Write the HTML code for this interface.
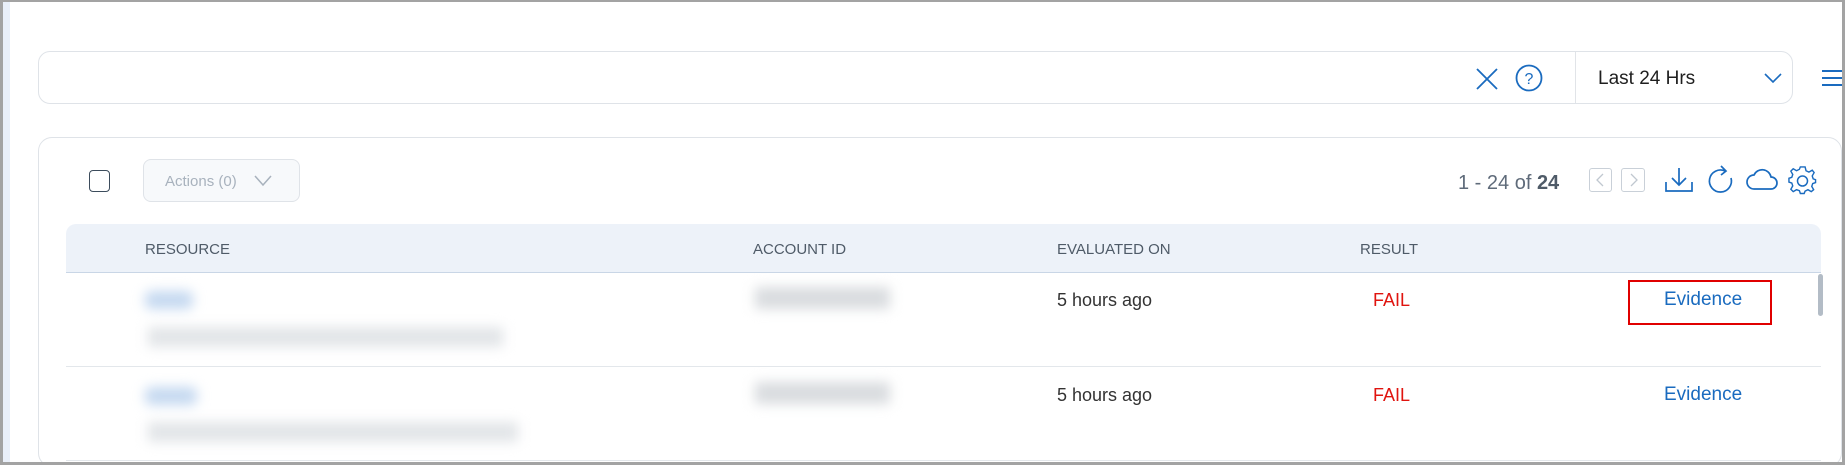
<!DOCTYPE html>
<html><head><meta charset="utf-8"><style>
*{margin:0;padding:0;box-sizing:border-box}
html,body{width:1845px;height:465px;overflow:hidden}
body{background:#fff;font-family:"Liberation Sans",Arial,sans-serif;position:relative}
.a{position:absolute}
.frame{left:0;top:0;width:1845px;height:465px;border-top:2px solid #a3a3a3;border-left:3px solid #a3a3a3;border-right:3px solid #a3a3a3;border-bottom:3px solid #a3a3a3}
.strip{left:3px;top:2px;width:7px;height:460px;background:#e9eff9}
.search{left:38px;top:51px;width:1755px;height:53px;border:1px solid #dfe3e8;border-radius:12px}
.card{left:38px;top:137px;width:1804px;height:330px;border:1px solid #dfe3e8;border-radius:14px}
.hdr{left:66px;top:224px;width:1755px;height:49px;background:#edf2f9;border-bottom:1px solid #c9d6e6;border-radius:10px 10px 0 0}
.ht{top:241px;font-size:15px;color:#4f5b68}
.rt{font-size:18px;color:#333}
.fail{font-size:18px;color:#e0140f}
.ev{font-size:19px;color:#1a6bbf}
.blur{filter:blur(6px)}
</style></head><body>
<div class="a strip"></div>
<div class="a search"></div>
<div class="a" style="left:1575px;top:52px;width:1px;height:51px;background:#e1e4e8"></div>
<svg class="a" style="left:1475px;top:68px" width="24" height="22"><path d="M2 1L22 21M22 1L2 21" stroke="#1a6bbf" stroke-width="1.8" fill="none"/></svg>
<svg class="a" style="left:1515px;top:64px" width="28" height="28"><circle cx="14" cy="14" r="12.5" stroke="#1a6bbf" stroke-width="1.8" fill="none"/><text x="14" y="20" font-size="16" text-anchor="middle" fill="#1a6bbf" font-family="Liberation Sans">?</text></svg>
<div class="a" style="left:1598px;top:68px;font-size:19px;color:#1f1f1f">Last 24 Hrs</div>
<svg class="a" style="left:1764px;top:72px" width="18" height="12"><path d="M1 2L9 10L17 2" stroke="#1a6bbf" stroke-width="1.6" fill="none"/></svg>
<svg class="a" style="left:1820px;top:68px" width="25" height="20"><path d="M2 3H25M2 10H25M2 17H25" stroke="#1a6bbf" stroke-width="2"/></svg>
<div class="a card"></div>
<div class="a" style="left:89px;top:170px;width:21px;height:22px;border:1.5px solid #3c4c5c;border-radius:4px"></div>
<div class="a" style="left:143px;top:159px;width:157px;height:43px;border:1px solid #dfe3e8;border-radius:8px;background:#f7f9fb"></div>
<div class="a" style="left:165px;top:173px;font-size:15px;color:#a8b2bd">Actions (0)</div>
<svg class="a" style="left:254px;top:175px" width="18" height="12"><path d="M1 1L9 10L17 1" stroke="#a8b2bd" stroke-width="1.5" fill="none"/></svg>
<div class="a" style="left:1458px;top:172px;font-size:20px;color:#5f6b7a">1 - 24 of <b style="color:#4f5b68">24</b></div>
<div class="a" style="left:1589px;top:168px;width:23px;height:24px;border:1.5px solid #c9d0d8;border-radius:3px"></div>
<div class="a" style="left:1621px;top:168px;width:24px;height:24px;border:1.5px solid #c9d0d8;border-radius:3px"></div>
<svg class="a" style="left:1589px;top:168px" width="56" height="24"><path d="M14 6L8 12L14 18M42 6L48 12L42 18" stroke="#c0c8d0" stroke-width="1.3" fill="none"/></svg>
<svg class="a" style="left:1664px;top:166px" width="30" height="28"><path d="M2 16V25H28V16M15 2V19M8 12L15 19L22 12" stroke="#1a6bbf" stroke-width="1.7" fill="none"/></svg>
<svg class="a" style="left:1706px;top:164px" width="30" height="32"><path d="M19 7A11 11 0 1 0 25 14M15 2L20 7L15 11" stroke="#1a6bbf" stroke-width="1.7" fill="none"/></svg>
<svg class="a" style="left:1746px;top:166px" width="32" height="26"><path d="M8 23H25A6 6 0 0 0 25 11A9 9 0 0 0 8 9A7 7 0 0 0 8 23Z" stroke="#1a6bbf" stroke-width="1.7" fill="none"/></svg>
<svg class="a" style="left:1788px;top:166px" width="30" height="30"><path d="M15 2L18 2L19 6L22 7.5L25.5 5.5L27.5 8L25.5 11.5L26.5 14.5L29 15.5V18.5L26 19.5L25 22.5L27 26L24.5 28L21 26L18 27.5L17 30H13L12 27L9 26L5.5 28L3 25.5L5 22L4 19L1 18V14L4 13L5 10L3 6.5L5.5 4L9 6L12 4.5L13 2Z" stroke="#1a6bbf" stroke-width="1.5" fill="none" transform="translate(0,-1) scale(0.95)"/><circle cx="14.5" cy="15" r="5" stroke="#1a6bbf" stroke-width="1.5" fill="none"/></svg>
<div class="a hdr"></div>
<div class="a ht" style="left:145px">RESOURCE</div>
<div class="a ht" style="left:753px">ACCOUNT ID</div>
<div class="a ht" style="left:1057px">EVALUATED ON</div>
<div class="a ht" style="left:1360px">RESULT</div>
<div class="a" style="left:1818px;top:274px;width:5px;height:42px;background:#b3bcc6;border-radius:3px"></div>
<div class="a" style="left:66px;top:366px;width:1755px;height:1px;background:#e3e7eb"></div>
<div class="a" style="left:66px;top:460px;width:1755px;height:1px;background:#e3e7eb"></div>
<div class="a blur" style="left:145px;top:291px;width:48px;height:18px;background:#c4d8f0;border-radius:6px"></div>
<div class="a blur" style="left:148px;top:327px;width:355px;height:20px;background:#e2e5e8"></div>
<div class="a blur" style="left:755px;top:287px;width:135px;height:22px;background:#d9dcdf"></div>
<div class="a blur" style="left:145px;top:387px;width:52px;height:18px;background:#c4d8f0;border-radius:6px"></div>
<div class="a blur" style="left:148px;top:422px;width:370px;height:20px;background:#e2e5e8"></div>
<div class="a blur" style="left:755px;top:382px;width:135px;height:22px;background:#d9dcdf"></div>
<div class="a rt" style="left:1057px;top:290px">5 hours ago</div>
<div class="a fail" style="left:1373px;top:290px">FAIL</div>
<div class="a ev" style="left:1664px;top:289px">Evidence</div>
<div class="a" style="left:1628px;top:280px;width:144px;height:45px;border:2px solid #e00000"></div>
<div class="a rt" style="left:1057px;top:385px">5 hours ago</div>
<div class="a fail" style="left:1373px;top:385px">FAIL</div>
<div class="a ev" style="left:1664px;top:384px">Evidence</div>
<div class="a frame"></div>
</body></html>
